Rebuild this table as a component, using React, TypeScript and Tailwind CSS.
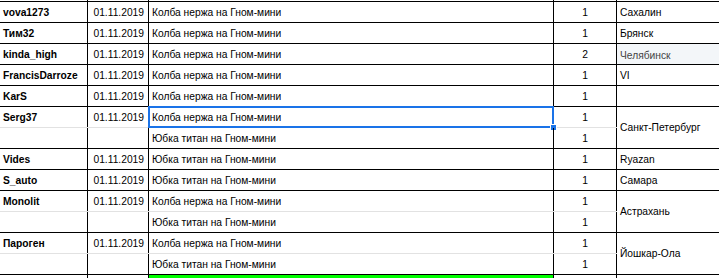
type Order = {
  name: string;
  date: string;
  items: string[];
  counts: string[];
  city: string;
  tinted?: boolean;
};

const orders: Order[] = [
  { name: "vova1273", date: "01.11.2019", items: ["Колба нержа на Гном-мини"], counts: ["1"], city: "Сахалин" },
  { name: "Тим32", date: "01.11.2019", items: ["Колба нержа на Гном-мини"], counts: ["1"], city: "Брянск" },
  { name: "kinda_high", date: "01.11.2019", items: ["Колба нержа на Гном-мини"], counts: ["2"], city: "Челябинск", tinted: true },
  { name: "FrancisDarroze", date: "01.11.2019", items: ["Колба нержа на Гном-мини"], counts: ["1"], city: "VI" },
  { name: "KarS", date: "01.11.2019", items: ["Колба нержа на Гном-мини"], counts: ["1"], city: "" },
  {
    name: "Serg37",
    date: "01.11.2019",
    items: ["Колба нержа на Гном-мини", "Юбка титан на Гном-мини"],
    counts: ["1", "1"],
    city: "Санкт-Петербург",
  },
  { name: "Vides", date: "01.11.2019", items: ["Юбка титан на Гном-мини"], counts: ["1"], city: "Ryazan" },
  { name: "S_auto", date: "01.11.2019", items: ["Юбка титан на Гном-мини"], counts: ["1"], city: "Самара" },
  {
    name: "Monolit",
    date: "01.11.2019",
    items: ["Колба нержа на Гном-мини", "Юбка титан на Гном-мини"],
    counts: ["1", "1"],
    city: "Астрахань",
  },
  {
    name: "Пароген",
    date: "01.11.2019",
    items: ["Колба нержа на Гном-мини", "Юбка титан на Гном-мини"],
    counts: ["1", "1"],
    city: "Йошкар-Ола",
  },
];

const cell = "h-[20px] flex items-end pb-[2px] leading-[14px] whitespace-nowrap border-r border-black shrink-0";

function SubRow({ order, idx, last }: { order: Order; idx: number; last: boolean }) {
  const first = idx === 0;
  const selected = order.name === "Serg37" && first;
  return (
    <div className={`flex ${last ? "" : "border-b border-[#e2e2e2]"}`}>
      <div className={`${cell} w-[88px] pl-[3px] font-bold`}>{first ? order.name : ""}</div>
      <div className={`${cell} w-[61px] justify-end pr-[4px]`}>{first ? order.date : ""}</div>
      <div className={`${cell} w-[405px] pl-[3px] relative`}>
        {order.items[idx]}
        {selected && (
          <>
            <div className="absolute -inset-px border-2 border-[#1a73e8] pointer-events-none" />
            <div className="absolute -right-[4px] -bottom-[4px] w-[7px] h-[7px] bg-[#1a73e8] border border-white" />
          </>
        )}
      </div>
      <div className={`${cell} w-[63px] justify-center`}>{order.counts[idx]}</div>
    </div>
  );
}

function Group({ order }: { order: Order }) {
  const multi = order.items.length > 1;
  const align = multi ? "items-center" : order.tinted ? "items-end pb-[1px]" : "items-end pb-[2px]";
  return (
    <div className="flex border-b border-black">
      <div className="flex flex-col">
        {order.items.map((_, i) => (
          <SubRow key={i} order={order} idx={i} last={i === order.items.length - 1} />
        ))}
      </div>
      <div
        className={`flex-1 flex pl-[3px] leading-[14px] whitespace-nowrap ${align} ${
          order.tinted ? "bg-[#f3f6f9] text-[#444]" : ""
        }`}
      >
        {order.city}
      </div>
    </div>
  );
}

function EdgeRow({ h, green }: { h: string; green?: boolean }) {
  return (
    <div className={`flex ${h}`}>
      <div className="w-[88px] border-r border-black" />
      <div className="w-[61px] border-r border-black" />
      <div className={`w-[405px] border-r border-black ${green ? "bg-[#00ff00]" : ""}`} />
      <div className="w-[63px] border-r border-black" />
      <div className="flex-1" />
    </div>
  );
}

export default function App() {
  return (
    <div
      className="w-[719px] h-[278px] overflow-hidden bg-white text-black text-[10.25px]"
      style={{ fontFamily: '"Liberation Sans", Arial, sans-serif' }}
    >
      <div className="border-b border-black">
        <EdgeRow h="h-[1px]" />
      </div>
      {orders.map((o) => (
        <Group key={o.name} order={o} />
      ))}
      <EdgeRow h="h-[10px]" green />
    </div>
  );
}
